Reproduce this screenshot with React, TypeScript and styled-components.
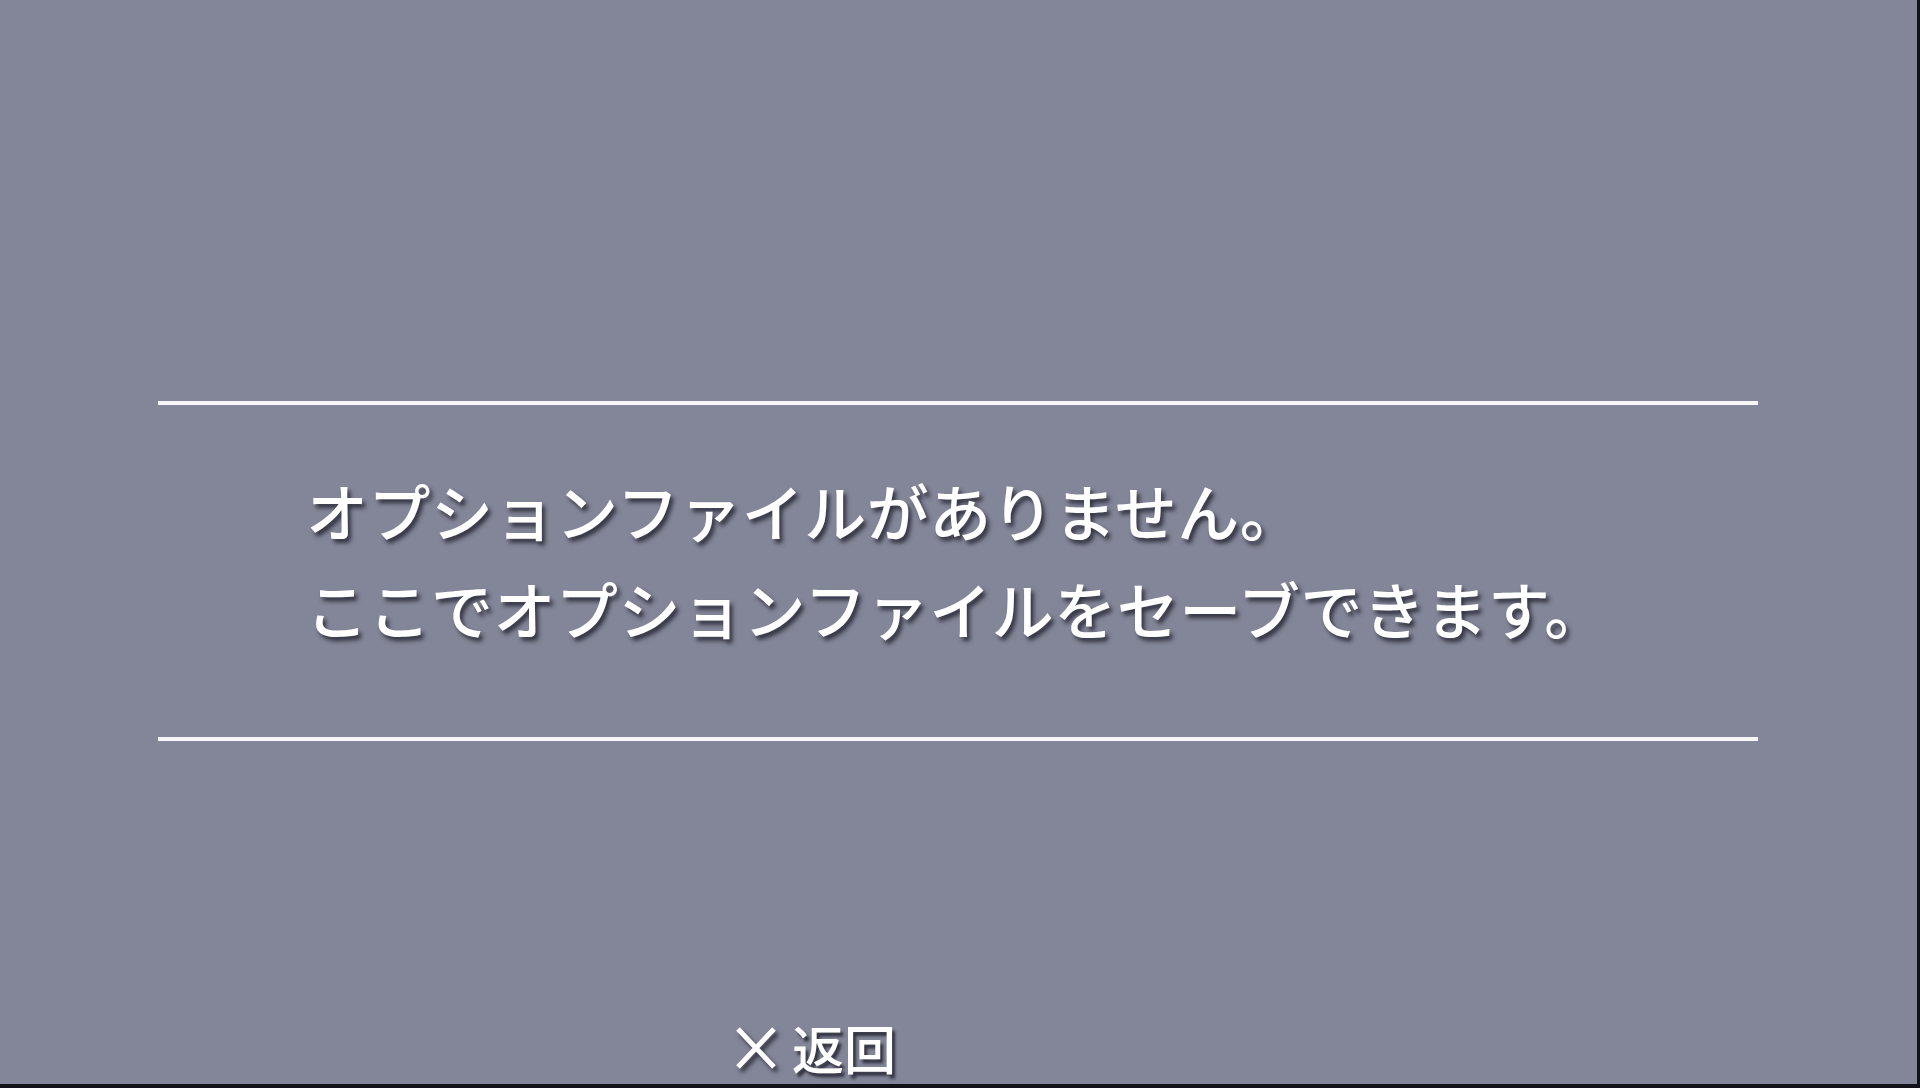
import styled, { createGlobalStyle } from 'styled-components';

const GlobalStyle = createGlobalStyle`
  html, body {
    margin: 0;
    padding: 0;
    background: #0e0e16;
  }
  body {
    font-family: "Noto Sans CJK JP", "Noto Sans", sans-serif;
  }
`;

const Screen = styled.div`
  box-sizing: border-box;
  width: 1920px;
  height: 1088px;
  overflow: hidden;
  background: #838698;
  border-right: 3px solid #11111a;
  border-bottom: 4px solid #11111a;
  display: flex;
  flex-direction: column;
  padding-top: 401px;
`;

const Panel = styled.section`
  width: 1600px;
  margin-left: 158px;
  display: flex;
  flex-direction: column;
`;

const Divider = styled.div`
  height: 4px;
  background: #f6f6f8;
`;

const Message = styled.div`
  padding: 56px 0 80px 148px;
  display: flex;
  flex-direction: column;
`;

const Line = styled.p`
  margin: 0;
  font-size: 62px;
  line-height: 98px;
  font-weight: 500;
  color: #ffffff;
  white-space: nowrap;
  letter-spacing: 0.5px;
  text-shadow: 3px 4px 4px rgba(30, 30, 44, 0.8);
`;

const Footer = styled.footer`
  margin-top: auto;
  margin-left: 734px;
  margin-bottom: 4px;
  display: flex;
  align-items: center;
  gap: 14px;
  height: 64px;
`;

const CrossIcon = styled.svg`
  width: 44px;
  height: 46px;
  filter: drop-shadow(3px 4px 2px rgba(30, 30, 44, 0.8));
`;

const FooterLabel = styled.span`
  font-size: 52px;
  line-height: 64px;
  font-weight: 500;
  color: #ffffff;
  text-shadow: 3px 4px 3px rgba(30, 30, 44, 0.8);
`;

const MESSAGE_LINES = [
  'オプションファイルがありません。',
  'ここでオプションファイルをセーブできます。',
];

export default function App() {
  return (
    <>
      <GlobalStyle />
      <Screen>
        <Panel>
          <Divider />
          <Message>
            {MESSAGE_LINES.map((line) => (
              <Line key={line}>{line}</Line>
            ))}
          </Message>
          <Divider />
        </Panel>
        <Footer>
          <CrossIcon viewBox="0 0 44 46">
            <path
              d="M4 4 L40 42 M40 4 L4 42"
              stroke="#ffffff"
              strokeWidth="5"
              strokeLinecap="butt"
              fill="none"
            />
          </CrossIcon>
          <FooterLabel>返回</FooterLabel>
        </Footer>
      </Screen>
    </>
  );
}
